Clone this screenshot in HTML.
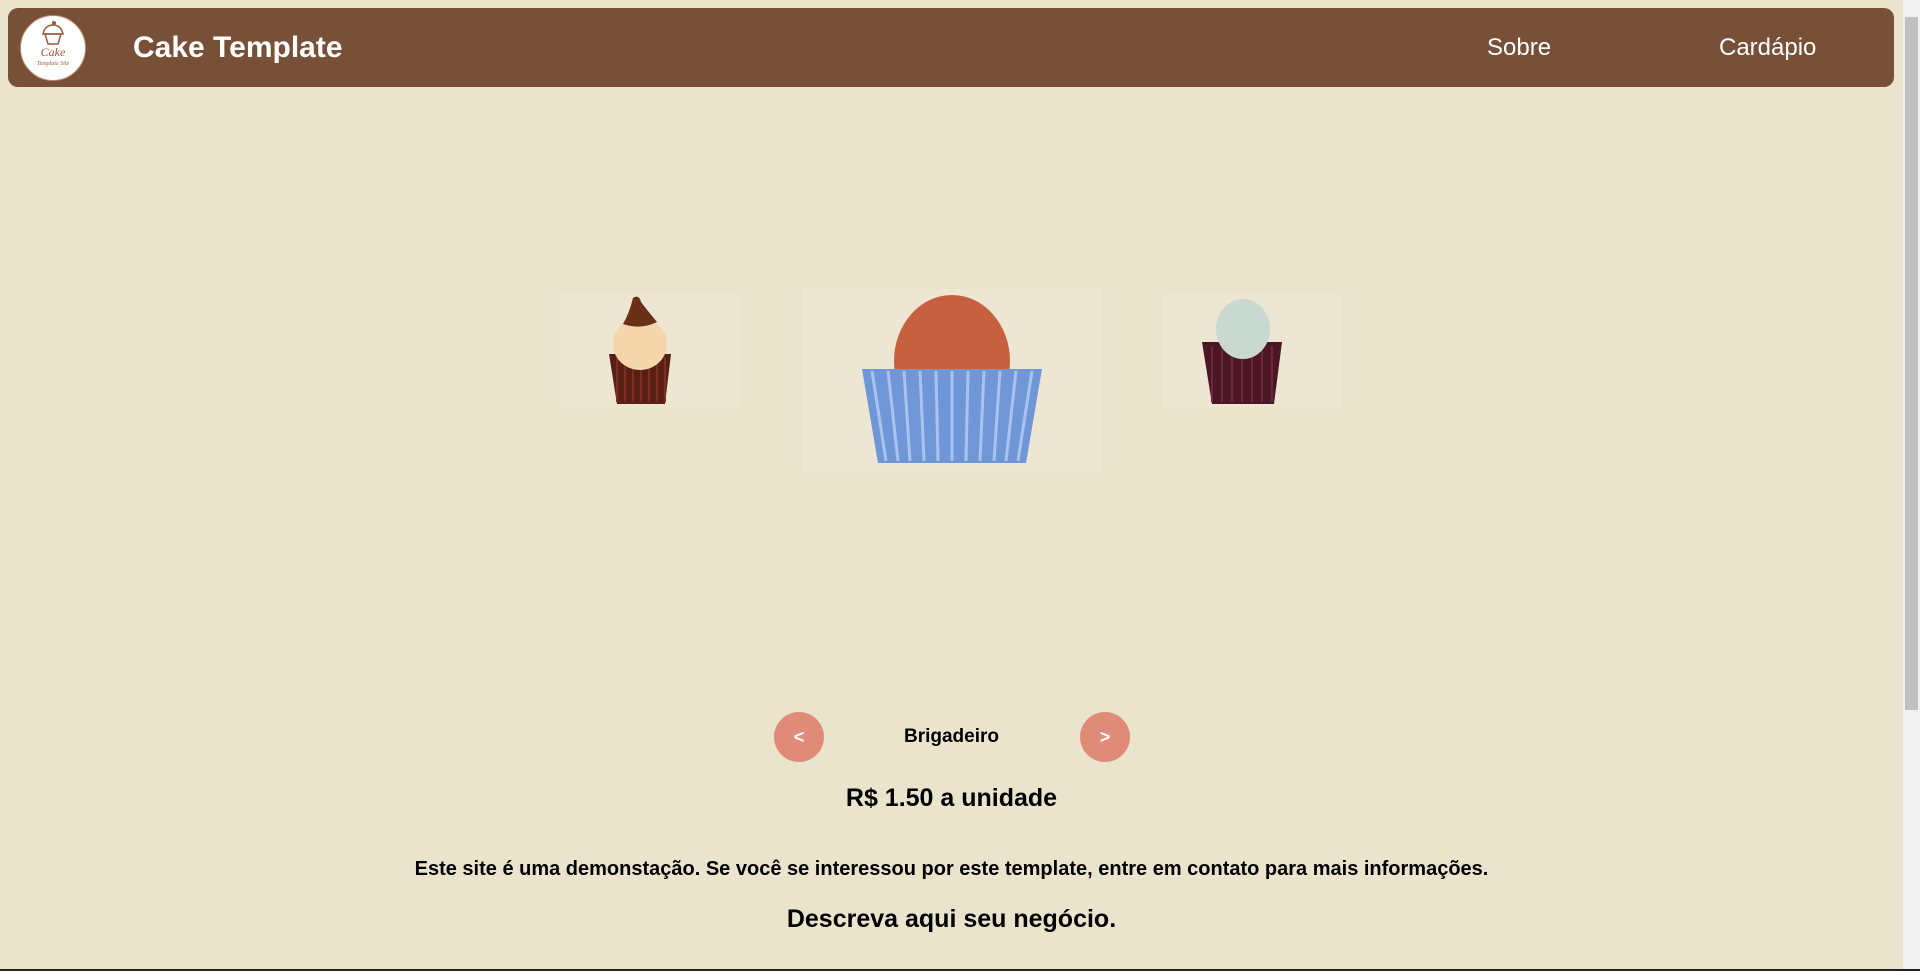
<!DOCTYPE html>
<html><head><meta charset="utf-8"><style>
html,body{margin:0;padding:0;}
body{width:1920px;height:971px;background:#ebe4cc;font-family:"Liberation Sans",Arial,sans-serif;position:relative;overflow:hidden;}
.hdr{position:absolute;left:8px;top:8px;width:1886px;height:79px;background:#784f37;border-radius:10px;}
.logo{position:absolute;left:20px;top:15px;width:66px;height:66px;border-radius:50%;background:#fff;border:1px solid #c08a6a;box-sizing:border-box;}
.t{position:absolute;color:#fff;white-space:nowrap;}
.c{position:absolute;left:0;width:1903px;text-align:center;font-weight:bold;color:#000;white-space:nowrap;}
.btn{position:absolute;top:712px;width:50px;height:50px;border-radius:50%;background:#e08b78;color:#fff;font-weight:bold;font-size:18px;text-align:center;line-height:50px;}
.sb{position:absolute;left:1903px;top:0;width:17px;height:969px;background:#f0f0f0;}
.th{position:absolute;left:1905px;top:17px;width:13px;height:693px;background:#c0c0c0;}
</style></head><body>
<div class="hdr"></div>
<div class="logo">
<svg width="64" height="64" viewBox="0 0 64 64">
<path d="M24 18 L40 18 L37 28 L27 28 Z" fill="none" stroke="#9a5a3a" stroke-width="1.5"/>
<path d="M22 18 Q24 9 32 9 Q40 9 42 18 Z" fill="none" stroke="#9a5a3a" stroke-width="1.5"/>
<circle cx="33" cy="7" r="2" fill="#9a5a3a"/>
<text x="32" y="40" text-anchor="middle" font-family="Liberation Serif,serif" font-style="italic" font-size="12" fill="#9a5a3a">Cake</text>
<text x="32" y="49" text-anchor="middle" font-family="Liberation Serif,serif" font-style="italic" font-size="6" fill="#9a5a3a">Template Site</text>
</svg></div>
<div class="t" style="left:133px;top:31px;font-size:30px;font-weight:bold;">Cake Template</div>
<div class="t" style="left:1487px;top:34px;font-size:24px;">Sobre</div>
<div class="t" style="left:1719px;top:34px;font-size:24px;">Cardápio</div>

<svg style="position:absolute;left:561px;top:294px" width="180" height="113">
<rect width="180" height="113" fill="#ede6d2"/>
<path d="M48 60 L110 60 L104 110 L56 110 Z" fill="#5a1f14"/>
<path d="M56 64 V108 M64 64 V108 M72 64 V108 M80 64 V108 M88 64 V108 M96 64 V108 M104 64 V108" stroke="#7a3020" stroke-width="2"/>
<ellipse cx="79" cy="50" rx="27" ry="26" fill="#f4d6aa"/>
<path d="M62 30 Q68 20 72 4 Q78 0 80 8 Q86 16 96 28 Q80 36 62 30Z" fill="#6a3018"/>
</svg>
<svg style="position:absolute;left:802px;top:289px" width="300" height="184">
<rect width="300" height="184" fill="#ede6d2"/>
<ellipse cx="150" cy="72" rx="58" ry="66" fill="#c7603e"/>
<path d="M60 80 L240 80 L224 174 L76 174 Z" fill="#6f97d8"/>
<path d="M70 82 L84 172 M86 82 L96 172 M102 82 L108 172 M118 82 L122 172 M134 82 L136 172 M150 82 V172 M166 82 L164 172 M182 82 L178 172 M198 82 L192 172 M214 82 L204 172 M230 82 L216 172" stroke="#a9c3ee" stroke-width="3"/>
</svg>
<svg style="position:absolute;left:1162px;top:294px" width="180" height="113">
<rect width="180" height="113" fill="#ede6d2"/>
<path d="M40 48 L120 48 L112 110 L50 110 Z" fill="#4d1626"/>
<path d="M50 52 V108 M60 52 V108 M70 52 V108 M80 52 V108 M90 52 V108 M100 52 V108 M110 52 V108" stroke="#6a2a3a" stroke-width="2"/>
<ellipse cx="81" cy="35" rx="27" ry="30" fill="#c9d9d2"/>
</svg>

<div class="btn" style="left:774px;">&lt;</div>
<div class="btn" style="left:1080px;">&gt;</div>
<div class="c" style="top:726px;font-size:19px;">Brigadeiro</div>
<div class="c" style="top:784px;font-size:25px;">R$ 1.50 a unidade</div>
<div class="c" style="top:858px;font-size:20px;">Este site é uma demonstação. Se você se interessou por este template, entre em contato para mais informações.</div>
<div class="c" style="top:905px;font-size:25px;">Descreva aqui seu negócio.</div>
<div class="sb"></div><div class="th"></div>
<div style="position:absolute;left:0;top:969px;width:1920px;height:2px;background:#222"></div>
</body></html>
